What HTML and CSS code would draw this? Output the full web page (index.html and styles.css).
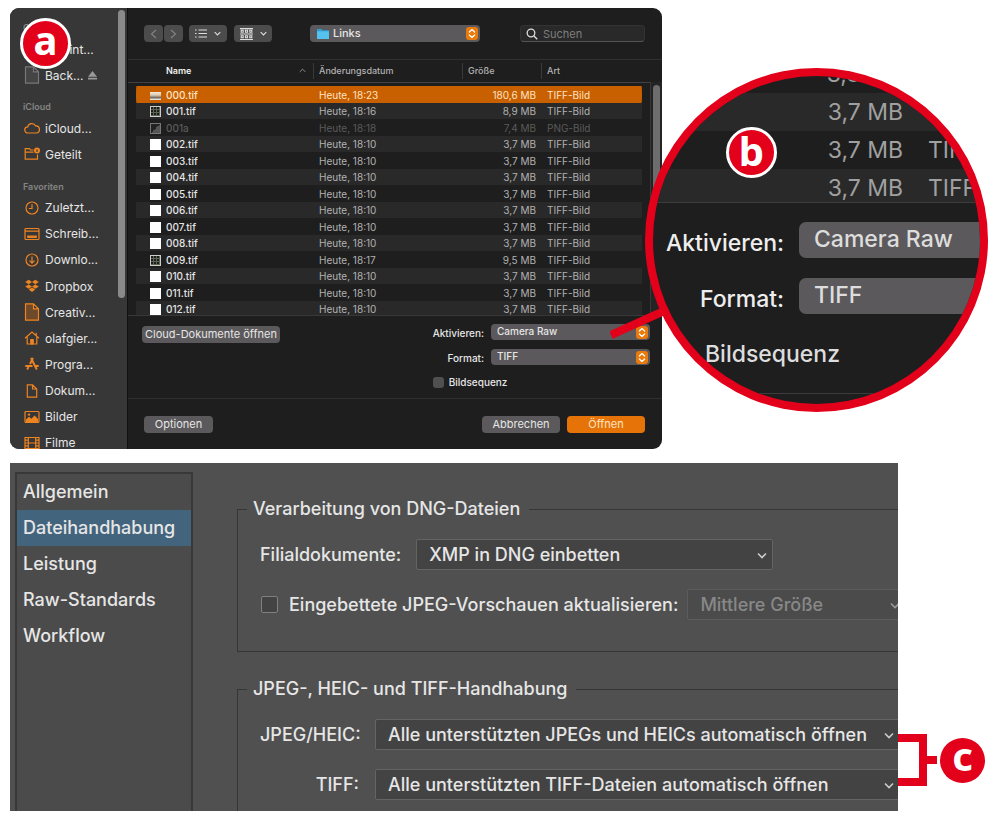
FILE: index.html
```html
<!DOCTYPE html>
<html lang="de">
<head>
<meta charset="utf-8">
<meta name="viewport" content="width=device-width, initial-scale=1">
<title>Camera Raw</title>
<link rel="stylesheet" href="styles.css">
</head>
<body>
<svg class="defs" aria-hidden="true">
  <symbol id="updown" viewBox="0 0 12 14"><path d="M3.2 5.4 6 2.8l2.8 2.6M3.2 8.6 6 11.2l2.8-2.6" fill="none" stroke="#fff" stroke-width="1.4" stroke-linecap="round" stroke-linejoin="round"/></symbol>
  <symbol id="chev" viewBox="0 0 10 6"><path d="M1 1l4 4 4-4" fill="none" stroke="currentColor" stroke-width="1.6"/></symbol>
</svg>

<section class="figure">
  <div class="dialog">
    <nav class="places" aria-label="Seitenleiste">
      <ul class="places-list">
        <li class="places-head">Orte</li>
        <li class="place"><svg class="place-icon" viewBox="0 0 16 16"></svg>Macint...</li>
        <li class="place"><svg class="place-icon gray" viewBox="0 0 16 18"><path d="M1.5.8h8l5 5v11.4h-13zM9.5.8v5h5"/></svg>Back...<svg class="eject" viewBox="0 0 8 8"><path d="M4 0l4 5H0zM0 6h8v1.6H0z"/></svg></li>
        <li class="places-head">iCloud</li>
        <li class="place"><svg class="place-icon" viewBox="0 0 16 16"><path d="M4 13a3.1 3.1 0 0 1-.3-6.200A4.200 4.200 0 0 1 11.600 6 3.500 3.500 0 0 1 12.300 13z"/></svg>iCloud...</li>
        <li class="place"><svg class="place-icon" viewBox="0 0 16 16"><path d="M9.500 4H6.500L5.300 2.600H1.200v10.600h12.300V8.500M1.200 6.200H9.500"/><circle class="fill" cx="13" cy="4.600" r="3"/><path d="M13 3.500v2.400" stroke="#373737"/></svg>Geteilt</li>
        <li class="places-head">Favoriten</li>
        <li class="place"><svg class="place-icon" viewBox="0 0 16 16"><circle cx="8" cy="8" r="6"/><path d="M8 4.200V8.500H4.800"/></svg>Zuletzt...</li>
        <li class="place"><svg class="place-icon" viewBox="0 0 16 16"><rect x="1" y="2.500" width="14" height="11" rx="1"/><path d="M1 5.200h14"/><path class="solid" d="M3.800 10.200h8.400v1.300H3.800z"/></svg>Schreib...</li>
        <li class="place"><svg class="place-icon" viewBox="0 0 16 16"><circle cx="8" cy="8" r="6"/><path d="M8 4.500v6.500M5.500 8.700L8 11.200l2.500-2.500"/></svg>Downlo...</li>
        <li class="place"><svg class="place-icon" viewBox="0 0 16 16"><path class="fill" d="M4.700 1.800L8 4 4.700 6.200 1.200 4zM11.300 1.800L14.800 4l-3.500 2.200L8 4zM4.700 6.400L8 8.600l-3.300 2.200-3.500-2.200zM11.300 6.400l3.500 2.200-3.500 2.200L8 8.600zM4.700 11.600L8 9.400l3.300 2.200L8 13.900z"/></svg>Dropbox</li>
        <li class="place"><svg class="place-icon tint" viewBox="0 0 16 18"><path d="M1.500.8h8l5 5v11.400h-13zM9.500.8v5h5"/></svg>Creativ...</li>
        <li class="place"><svg class="place-icon" viewBox="0 0 16 16"><path d="M1 8.200L8 2l7 6.200M3.200 7v7h9.600V7M12.200 5.500V2.800"/><path class="solid" d="M6.800 9.500h2.400V14H6.800z"/></svg>olafgier...</li>
        <li class="place"><svg class="place-icon thick" viewBox="0 0 16 16"><path d="M7 2l5.800 11.500M9 2L6 8M4.500 11l-1.300 2.500M1.300 10h7.200M11.500 10h3.200"/></svg>Progra...</li>
        <li class="place"><svg class="place-icon" viewBox="0 0 16 16"><path d="M3.300 1.800h5.200l4.200 4.200v8.200H3.300zM8.500 1.800V6h4.200"/></svg>Dokum...</li>
        <li class="place"><svg class="place-icon" viewBox="0 0 16 16"><rect x="1" y="2.500" width="14" height="11" rx="1"/><path class="fill" d="M2 13v-2.500l3-2.700 2.400 2 3.200-3.300L14 10v3z"/><circle class="fill" cx="5" cy="5.600" r="1.200"/></svg>Bilder</li>
        <li class="place"><svg class="place-icon" viewBox="0 0 16 16"><path d="M1 2.500h14v11H1zM4.300 2.500v11M11.700 2.500v11M4.300 8h7.400M1 5.200h3.300M1 8h3.300M1 10.800h3.300M11.700 5.200H15M11.700 8H15M11.700 10.800H15"/></svg>Filme</li>
      </ul>
      <span class="places-scroll"></span>
    </nav>

    <div class="pane">
      <header class="toolbar">
        <div class="pair">
          <button class="tool dim" aria-label="Zurück"><svg width="7" height="10" viewBox="0 0 7 10"><path d="M6 1L1.500 5 6 9"/></svg></button>
          <button class="tool dim" aria-label="Vorwärts"><svg width="7" height="10" viewBox="0 0 7 10"><path d="M1 1l4.500 4L1 9"/></svg></button>
        </div>
        <button class="tool wide" aria-label="Liste"><svg width="12" height="9" viewBox="0 0 12 9"><path d="M3.500 1H12M3.500 4.500H12M3.500 8H12M0 1h1.500M0 4.500h1.500M0 8h1.500"/></svg><svg class="mini" width="7" height="5"><use href="#chev"/></svg></button>
        <button class="tool wide" aria-label="Gruppieren"><svg width="13" height="12" viewBox="0 0 13 12"><path d="M0 .6h13M0 6h13M0 11.500h13M1.200 2.300h2v2h-2zM5.500 2.300h2v2h-2zM9.800 2.300h2v2h-2zM1.200 7.700h2v2h-2zM5.500 7.700h2v2h-2zM9.800 7.700h2v2h-2z"/></svg><svg class="mini" width="7" height="5"><use href="#chev"/></svg></button>
        <div class="popup folder-popup">
          <svg class="folder" viewBox="0 0 12 11"><path d="M0 1h4.500l1 1.200H12V11H0z" fill="#2e9fd0"/><path d="M0 3.200h12V11H0z" fill="#55c1ee"/></svg>
          <select aria-label="Ordner"><option>Links</option></select>
          <svg class="knob"><use href="#updown"/></svg>
        </div>
        <label class="search"><svg width="12" height="12" viewBox="0 0 12 12"><circle cx="5" cy="5" r="3.800"/><path d="M8 8l3.200 3.200"/></svg><input type="text" placeholder="Suchen" aria-label="Suchen"></label>
      </header>

      <div class="files">
        <table class="file-table">
          <colgroup><col class="c-name"><col class="c-date"><col class="c-size"><col></colgroup>
          <thead><tr><th class="th-name"><span class="th-in">Name<svg width="7" height="5" viewBox="0 0 10 6"><path d="M1 5l4-4 4 4" fill="none" stroke="#999" stroke-width="1.300"/></svg></span></th><th>Änderungsdatum</th><th>Größe</th><th>Art</th></tr></thead>
          <tbody>
            <tr class="sel"><td><i class="thumb photo"></i>000.tif</td><td>Heute, 18:23</td><td>180,6 MB</td><td>TIFF-Bild</td></tr>
            <tr><td><i class="thumb sheet"></i>001.tif</td><td>Heute, 18:16</td><td>8,9 MB</td><td>TIFF-Bild</td></tr>
            <tr class="off"><td><i class="thumb shot"></i>001a</td><td>Heute, 18:18</td><td>7,4 MB</td><td>PNG-Bild</td></tr>
            <tr><td><i class="thumb"></i>002.tif</td><td>Heute, 18:10</td><td>3,7 MB</td><td>TIFF-Bild</td></tr>
            <tr><td><i class="thumb"></i>003.tif</td><td>Heute, 18:10</td><td>3,7 MB</td><td>TIFF-Bild</td></tr>
            <tr><td><i class="thumb"></i>004.tif</td><td>Heute, 18:10</td><td>3,7 MB</td><td>TIFF-Bild</td></tr>
            <tr><td><i class="thumb"></i>005.tif</td><td>Heute, 18:10</td><td>3,7 MB</td><td>TIFF-Bild</td></tr>
            <tr><td><i class="thumb"></i>006.tif</td><td>Heute, 18:10</td><td>3,7 MB</td><td>TIFF-Bild</td></tr>
            <tr><td><i class="thumb"></i>007.tif</td><td>Heute, 18:10</td><td>3,7 MB</td><td>TIFF-Bild</td></tr>
            <tr><td><i class="thumb"></i>008.tif</td><td>Heute, 18:10</td><td>3,7 MB</td><td>TIFF-Bild</td></tr>
            <tr><td><i class="thumb sheet"></i>009.tif</td><td>Heute, 18:17</td><td>9,5 MB</td><td>TIFF-Bild</td></tr>
            <tr><td><i class="thumb"></i>010.tif</td><td>Heute, 18:10</td><td>3,7 MB</td><td>TIFF-Bild</td></tr>
            <tr><td><i class="thumb"></i>011.tif</td><td>Heute, 18:10</td><td>3,7 MB</td><td>TIFF-Bild</td></tr>
            <tr><td><i class="thumb"></i>012.tif</td><td>Heute, 18:10</td><td>3,7 MB</td><td>TIFF-Bild</td></tr>
          </tbody>
        </table>
        <div class="files-track"><span class="files-scroll"></span></div>
      </div>

      <div class="options">
        <button class="btn cloud">Cloud-Dokumente öffnen</button>
        <div class="fields">
          <label for="act">Aktivieren:</label>
          <div class="popup"><select id="act"><option>Camera Raw</option></select><svg class="knob"><use href="#updown"/></svg></div>
          <label for="fmt">Format:</label>
          <div class="popup"><select id="fmt"><option>TIFF</option></select><svg class="knob"><use href="#updown"/></svg></div>
          <label class="seq"><input type="checkbox">Bildsequenz</label>
        </div>
      </div>

      <footer class="actions">
        <button class="btn opt">Optionen</button>
        <button class="btn act">Abbrechen</button>
        <button class="btn act primary">Öffnen</button>
      </footer>
    </div>
  </div>

  <svg class="pointer" width="60" height="40" viewBox="0 0 60 40"><path d="M1 32L54 8" stroke="#e2001a" stroke-width="8"/></svg>

  <div class="lens">
    <div class="lens-rows">
      <div class="lens-row"><span>3,8 MB</span><span></span></div>
      <div class="lens-row"><span>3,7 MB</span><span></span></div>
      <div class="lens-row"><span>3,7 MB</span><span>TIFF</span></div>
      <div class="lens-row"><span>3,7 MB</span><span>TIFF</span></div>
    </div>
    <div class="lens-fields">
      <label for="lact">Aktivieren:</label><select id="lact"><option>Camera Raw</option></select>
      <label for="lfmt">Format:</label><select id="lfmt"><option>TIFF</option></select>
      <span class="lens-seq">Bildsequenz</span>
    </div>
  </div>
  <span class="badge badge-a">a</span>
  <span class="badge badge-b">b</span>
</section>

<section class="figure second">
  <div class="prefs">
    <ul class="tabs">
      <li><a href="#allgemein">Allgemein</a></li>
      <li><a class="current" href="#datei">Dateihandhabung</a></li>
      <li><a href="#leistung">Leistung</a></li>
      <li><a href="#raw">Raw-Standards</a></li>
      <li><a href="#workflow">Workflow</a></li>
    </ul>
    <form class="sheet-form">
      <fieldset>
        <legend>Verarbeitung von DNG-Dateien</legend>
        <div class="line">
          <label for="side">Filialdokumente:</label>
          <div class="drop drop-side"><select id="side"><option>XMP in DNG einbetten</option></select><svg class="arrow"><use href="#chev"/></svg></div>
        </div>
        <div class="line">
          <label class="check"><input type="checkbox">Eingebettete JPEG-Vorschauen aktualisieren:</label>
          <div class="drop drop-off"><select aria-label="Vorschaugröße" disabled><option>Mittlere Größe</option></select><svg class="arrow"><use href="#chev"/></svg></div>
        </div>
      </fieldset>
      <fieldset class="last">
        <legend>JPEG-, HEIC- und TIFF-Handhabung</legend>
        <div class="line">
          <label class="name" for="jpg">JPEG/HEIC:</label>
          <div class="drop"><select id="jpg"><option>Alle unterstützten JPEGs und HEICs automatisch öffnen</option></select><svg class="arrow"><use href="#chev"/></svg></div>
        </div>
        <div class="line">
          <label class="name" for="tif">TIFF:</label>
          <div class="drop"><select id="tif"><option>Alle unterstützten TIFF-Dateien automatisch öffnen</option></select><svg class="arrow"><use href="#chev"/></svg></div>
        </div>
      </fieldset>
    </form>
  </div>
  <div class="callout">
    <svg class="bracket" width="40" height="52" viewBox="0 0 40 52"><path d="M0 4h25v44H0M25 26h14" fill="none" stroke="#e2001a" stroke-width="8"/></svg>
    <span class="badge badge-c">c</span>
  </div>
</section>
</body>
</html>
```
FILE: styles.css
```css
* { box-sizing: border-box; }
body { margin: 0; padding: 8px 10px 6px; background: #fff; font-family: Inter, "Liberation Sans", sans-serif; }
ul { list-style: none; margin: 0; padding: 0; }
button, select, input { font: inherit; color: inherit; border: 0; margin: 0; padding: 0; }
select { appearance: none; background: none; }
.defs { position: absolute; width: 0; height: 0; }
.figure { position: relative; padding-right: 328px; }

/* open dialog */
.dialog { display: grid; grid-template-columns: 118px minmax(0, 1fr); background: #1e1e1e; color: #e6e6e6; border-radius: 9px; overflow: hidden; }
.places { display: flex; position: relative; margin-bottom: -7px; background: #373737; border-right: 1px solid #111; font-size: 12px; }
.places-list { flex: 1; height: 0; min-height: 100%; display: flex; flex-direction: column; padding-top: 1px; }
.places-head { flex: none; margin-top: 10px; padding-left: 13px; height: 17px; line-height: 17px; font-size: 9px; font-weight: 600; color: #858585; }
.place { flex: 1 1 26px; min-height: 26px; display: flex; align-items: center; gap: 5px; padding-left: 14px; white-space: nowrap; }
.place-icon { width: 16px; height: 16px; flex: none; fill: none; stroke: #ee8420; stroke-width: 1.2; }
.place-icon .solid, .place-icon .fill { fill: #ee8420; }
.place-icon .fill { stroke: none; }
.place-icon.thick { stroke-width: 1.9; }
.place-icon.tint { fill: #70492a; height: 18px; }
.place-icon.gray { fill: #444; stroke: #777; height: 18px; }
.eject { width: 9px; height: 9px; fill: #999; }
.places-scroll { position: absolute; top: 2px; right: 2px; width: 7px; height: 288px; border-radius: 4px; background: #8a8a8a; }

.pane { display: flex; flex-direction: column; min-width: 0; }
.toolbar { display: flex; align-items: center; height: 51px; padding: 0 17px 0 16px; }
.tool { display: flex; align-items: center; justify-content: center; height: 17px; background: #4d4c4d; color: #ddd; border-radius: 4px; }
.tool svg { fill: none; stroke: currentColor; stroke-width: 1.1; }
.dim { width: 19px; color: #858585; }
.pair { display: flex; gap: 1px; margin-right: 6px; }
.wide { width: 38px; gap: 7px; margin-right: 7px; }
.popup { position: relative; display: flex; align-items: center; background: #5b595b; border-radius: 4px; height: 16px; }
.popup select { flex: 1; height: 16px; padding: 0 24px 1px 6px; line-height: 15px; }
.knob { position: absolute; right: 2px; top: 2px; width: 12px; height: 13px; background: #ea7a0c; border-radius: 3px; pointer-events: none; }
.folder-popup { flex: 0 1 170px; height: 17px; margin-left: 31px; font-size: 11px; font-weight: 500; }
.folder { width: 12px; height: 11px; margin-left: 7px; }
.folder-popup select { padding-left: 4px; }
.search { display: flex; align-items: center; gap: 5px; flex: 0 1 125px; height: 17px; margin-left: auto; padding-left: 5px; background: #292929; border: 1px solid #333; border-bottom-color: #555; border-radius: 4px; }
.search svg { flex: none; fill: none; stroke: #ddd; stroke-width: 1.3; }
.search input { width: 0; flex: 1; background: none; font-size: 11px; }
.search input::placeholder { color: #7e7e7e; opacity: 1; }

.files { display: flex; height: 257px; overflow: hidden; border-top: 1px solid #303030; border-bottom: 1px solid #383838; }
.file-table { flex: 1; table-layout: fixed; border-spacing: 0; font-size: 10px; color: #b2b2b2; white-space: nowrap; }
.c-name { width: 185px; }
.c-date { width: 149px; }
.c-size { width: 79px; }
th { height: 23px; padding: 0 0 2px 6px; border-bottom: 1px solid #414141; text-align: left; font-weight: 500; font-size: 9px; }
th + th { background: linear-gradient(#3a3a3a, #3a3a3a) 0 3px / 1px 16px no-repeat; }
.th-name { padding-left: 38px; color: #eee; font-weight: 600; }
.th-in { display: flex; align-items: center; justify-content: space-between; padding-right: 7px; }
tbody::before { content: ""; display: block; height: 3px; }
td { height: 17px; padding: 0 0 0 6px; line-height: 15px; background-clip: padding-box; }
tr:nth-child(even) td { height: 16px; background-color: #292929; }
tr:nth-child(odd) td { line-height: 16px; }
td:first-child { border-left: 8px solid transparent; border-radius: 12px 0 0 12px; padding-left: 14px; color: #e4e4e4; font-weight: 500; }
td:last-child { border-right: 8px solid transparent; border-radius: 0 12px 12px 0; }
td:nth-child(3) { text-align: right; padding-right: 5px; }
tbody .sel td { background-color: #c86000; color: #ffe3c4; }
tbody .off td { color: #5a5a5a; }
.thumb { display: inline-block; width: 11px; height: 11px; margin-right: 5px; background: #fff; vertical-align: middle; }
.photo { height: 8px; background: linear-gradient(#f4ead8, #d8c8b0 40%, #756a5c 70%, #fff); }
.sheet { border: 1px solid #ccc; background: repeating-linear-gradient(90deg, transparent 0 2px, #5c6454 2px 3px), repeating-linear-gradient(#1c1c1c 0 2px, #5c6454 2px 3px); }
.shot { border: 1px solid #777; background: linear-gradient(135deg, #222 50%, #555 50%); }
.files-track { width: 12px; margin-top: 22px; padding: 3px 2px; border-left: 1px solid #383838; background: #242424; }
.files-scroll { display: block; width: 7px; height: 120px; border-radius: 4px; background: #6d6d6d; }

.options { display: flex; justify-content: space-between; align-items: flex-start; height: 83px; padding: 8px 12px 0 14px; border-bottom: 1px solid #303030; font-size: 11px; }
.btn { height: 17px; border-radius: 4px; background: #5b595b; color: #e6e6e6; font-size: 11px; line-height: 15px; }
.cloud { width: 138px; margin-top: 2px; }
.fields { display: grid; grid-template-columns: auto 159px; column-gap: 7px; row-gap: 9px; align-items: center; font-size: 10px; font-weight: 500; }
.fields label { text-align: right; padding-top: 2px; }
.fields .seq { grid-column: 1 / -1; display: flex; align-items: center; gap: 5px; text-align: left; }
.seq input { appearance: none; width: 11px; height: 11px; border-radius: 3px; background: #505050; }
.actions { display: flex; align-items: center; gap: 7px; height: 50px; padding: 0 17px 0 16px; }
.opt { width: 69px; margin-right: auto; }
.act { width: 78px; }
.primary { background: #e67307; color: #ffe3c4; }

/* enlarged detail */
.pointer { position: absolute; right: 320px; top: 295px; }
.lens { position: absolute; top: 60px; right: 2px; width: 343px; height: 344px; border: 8px solid #e2001a; border-radius: 50%; overflow: hidden; background: #1e1e1e; color: #eee; }
.lens-rows { margin-top: -21px; height: 148px; overflow: hidden; border-bottom: 1px solid #3c3c3c; color: #a0a0a0; font-size: 23px; }
.lens-row { display: grid; grid-template-columns: 250px 1fr; column-gap: 25px; height: 38px; line-height: 38px; white-space: nowrap; }
.lens-row:nth-child(even) { background: #292929; }
.lens-row span:first-child { text-align: right; }
.lens-fields { display: grid; grid-template-columns: 131px 1fr; column-gap: 15px; row-gap: 20px; padding-top: 19px; height: 191px; align-content: start; border-bottom: 1px solid #3c3c3c; font-size: 23px; }
.lens-fields label { text-align: right; line-height: 42px; height: 36px; font-weight: 500; }
.lens-fields select { height: 36px; padding: 0 0 2px 15px; background: #5b595b; border-radius: 7px 0 0 7px; font-weight: 500; color: #ddd; }
.lens-seq { grid-column: 1 / -1; padding-left: 52px; line-height: 40px; color: #ddd; font-weight: 500; }

.badge { display: flex; align-items: center; justify-content: center; width: 51px; height: 51px; border: 3px solid #fff; border-radius: 50%; background: #e2001a; color: #fff; font: bold 40px/36px "Noto Sans", sans-serif; padding-bottom: 8px; }
.badge-a { position: absolute; left: 10px; top: 10px; }
.badge-b { position: absolute; right: 213px; top: 119px; padding-bottom: 4px; }

/* preferences */
.second { margin-top: 14px; padding-right: 92px; }
.prefs { display: grid; grid-template-columns: 178px minmax(0, 1fr); column-gap: 44px; padding: 9px 0 0 5px; background: #505050; color: #e6e6e6; overflow: hidden; font-size: 18px; font-weight: 500; }
.tabs { border: 2px solid #383838; border-bottom: 0; background: #4b4b4b; }
.tabs a { display: block; height: 36px; line-height: 36px; padding-left: 6px; color: inherit; text-decoration: none; }
.tabs .current { background: #43647d; }
.sheet-form { padding-top: 25px; min-width: 0; }
fieldset { margin: 0 0 25px; padding: 18px 0 31px 22px; border: 1px solid #363636; border-right: 0; min-width: 0; display: block; }
fieldset.last { margin: 0; border-bottom: 0; padding-bottom: 11px; }
legend { margin-left: -13px; padding: 0 9px 0 6px; line-height: 24px; }
.line { display: flex; align-items: center; height: 31px; white-space: nowrap; }
.line + .line { margin-top: 19px; }
.name { width: 99px; text-align: right; }
.drop { position: relative; flex: 1; margin: 0 -2px 0 16px; height: 31px; background: #434343; border: 1px solid #646464; border-radius: 2px; }
.drop select { width: 100%; height: 29px; padding: 0 20px 0 12px; opacity: 1; }
.drop-side { flex: 0 1 357px; margin-left: 15px; }
.drop-off { margin: 0 -8px 0 9px; background: #4b4b4b; color: #888; border-color: #5c5c5c; }
.arrow { position: absolute; right: 5px; top: 12px; width: 10px; height: 7px; color: #ccc; pointer-events: none; }
.drop-off .arrow { color: #999; }
.check { display: flex; align-items: center; gap: 11px; }
.check input { appearance: none; width: 17px; height: 17px; margin-left: 1px; background: #434343; border: 1px solid #808080; border-radius: 2px; }
.callout { position: absolute; right: 5px; bottom: 25px; display: flex; align-items: center; gap: 2px; }
.badge-c { width: 45px; height: 45px; border: 0; }
```
